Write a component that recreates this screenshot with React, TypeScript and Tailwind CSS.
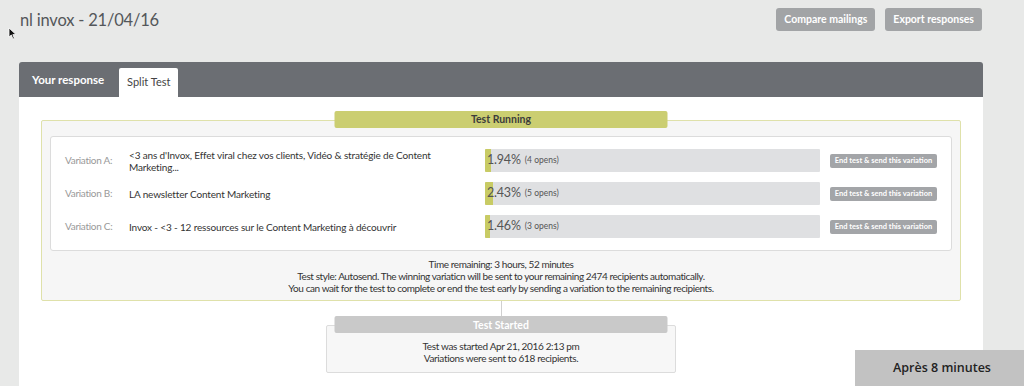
import React from "react";

const variations = [
  {
    label: "Variation A:",
    text: "<3 ans d'Invox, Effet viral chez vos clients, Vidéo & stratégie de Content Marketing...",
    pct: 1.94,
    opens: 4,
  },
  { label: "Variation B:", text: "LA newsletter Content Marketing", pct: 2.43, opens: 5 },
  {
    label: "Variation C:",
    text: "Invox - <3 - 12 ressources sur le Content Marketing à découvrir",
    pct: 1.46,
    opens: 3,
  },
];

export default function App() {
  return (
    <div
      className="relative w-[1024px] h-[386px] overflow-hidden bg-[#e8e9e8] text-[#333]"
      style={{ fontFamily: "Lato, 'Liberation Sans', sans-serif" }}
    >
      {/* header */}
      <div className="flex items-start justify-between pl-[20px] pr-[42px] pt-[8px] h-[62px]">
        <h1 className="text-[16.5px] leading-[24px] tracking-[-0.2px] text-[#54575a]">nl invox - 21/04/16</h1>
        <div className="flex gap-[10px]">
          <button className="h-[23px] px-[8px] rounded-[3px] bg-[#a2a4a6] text-white text-[10.5px] font-bold">
            Compare mailings
          </button>
          <button className="h-[23px] px-[8px] rounded-[3px] bg-[#a2a4a6] text-white text-[10.5px] font-bold">
            Export responses
          </button>
        </div>
      </div>

      {/* cursor */}
      <svg className="absolute left-[8px] top-[27px]" width="9" height="13" viewBox="0 0 9 13">
        <path d="M1 1 L1 10 L3.3 8 L5 12 L6.4 11.4 L4.8 7.6 L8 7.6 Z" fill="#111" stroke="#fff" strokeWidth="0.8" />
      </svg>

      {/* card */}
      <div className="ml-[19px] mr-[41px]">
        <div className="h-[35px] bg-[#6b6e73] rounded-t-[3px] flex items-end pl-[13px]">
          <div className="h-[35px] flex items-center text-white font-bold text-[11.5px] pr-[15px] pt-[1px]">
            Your response
          </div>
          <div className="h-[29px] w-[59px] bg-white rounded-t-[2px] flex items-center justify-center text-[11px] text-[#444]">
            Split Test
          </div>
        </div>
        <div className="bg-white h-[300px] pt-[23px] pl-[22px] pr-[22px]">
          {/* Test running */}
          <div className="relative border border-[#dfe1aa] bg-[#f6f6f6] rounded-[2px] h-[181px] pt-[15px] px-[8px]">
            <div className="absolute left-1/2 -translate-x-1/2 -top-[10px] w-[333px] h-[17px] rounded-[2px] bg-[#cbce71] flex items-center justify-center text-[10.5px] font-bold text-[#3c3c3c]">
              Test Running
            </div>
            <div className="bg-white border border-[#dcdcdc] rounded-[3px] h-[115px] pt-[12px] pl-[14px] pr-[13px] flex flex-col gap-[10px]">
              {variations.map((v) => (
                <div key={v.label} className="flex items-center h-[23px]">
                  <div className="w-[64px] shrink-0 text-[10px] tracking-[-0.3px] text-[#999]">{v.label}</div>
                  <div className="w-[356px] shrink-0 pr-[40px] text-[10px] leading-[12px] tracking-[-0.15px] text-[#333]">
                    {v.text}
                  </div>
                  <div className="relative w-[335px] shrink-0 h-[23px] bg-[#dfe0e2] rounded-[1px] flex items-center">
                    <div
                      className="absolute left-0 top-0 h-full bg-[#c8cb64] rounded-l-[1px]"
                      style={{ width: `${v.pct.toFixed(2)}%` }}
                    />
                    <span className="relative pl-[2px] text-[12.5px] tracking-[-0.2px] text-[#555]">{v.pct.toFixed(2)}%</span>
                    <span className="relative pl-[4px] text-[8.5px] text-[#555]">({v.opens} opens)</span>
                  </div>
                  <button className="ml-[10px] shrink-0 w-[107px] h-[14px] rounded-[2px] bg-[#a3a5a8] text-white text-[7.5px] font-bold leading-[14px] whitespace-nowrap">
                    End test &amp; send this variation
                  </button>
                </div>
              ))}
            </div>
            <div className="pt-[7px] text-center text-[10px] leading-[12px] tracking-[-0.42px] text-[#333]">
              <div>Time remaining: 3 hours, 52 minutes</div>
              <div>Test style: Autosend. The winning variaticn will be sent to your remaining 2474 recipients automatically.</div>
              <div>You can wait for the test to complete or end the test early by sending a variation to the remaining recipients.</div>
            </div>
          </div>
          {/* connector */}
          <div className="flex justify-center">
            <div className="w-px h-[15px] bg-[#d0d0d0]" />
          </div>
          {/* Test started */}
          <div className="flex justify-center">
            <div className="relative w-[350px] h-[48px] mt-[9px] border border-[#dcdcdc] bg-[#f7f7f7] rounded-[2px] pt-[14px] text-center text-[10px] leading-[12px] tracking-[-0.35px] text-[#333]">
              <div className="absolute left-1/2 -translate-x-1/2 -top-[10px] w-[333px] h-[17px] rounded-[2px] bg-[#c9c9c9] flex items-center justify-center text-[10.5px] font-bold tracking-normal text-white">
                Test Started
              </div>
              <div>Test was started Apr 21, 2016 2:13 pm</div>
              <div>Variations were sent to 618 recipients.</div>
            </div>
          </div>
        </div>
      </div>

      {/* overlay caption */}
      <div
        className="absolute left-[855px] top-[350px] w-[169px] h-[36px] bg-[#c2c2c2] flex items-center justify-center pl-[5px] text-[12.5px] font-semibold text-[#222]"
        style={{ fontFamily: "'Open Sans', sans-serif" }}
      >
        Après 8 minutes
      </div>
    </div>
  );
}
